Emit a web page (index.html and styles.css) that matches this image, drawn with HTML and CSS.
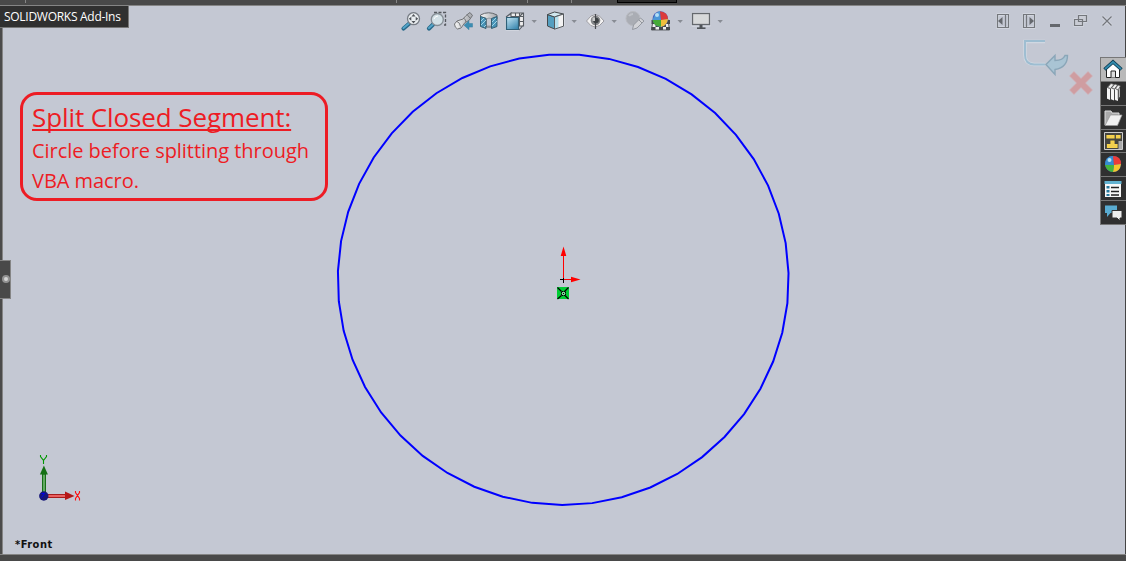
FILE: index.html
```html
<!DOCTYPE html>
<html lang="en">
<head>
<meta charset="utf-8">
<title>SOLIDWORKS sketch</title>
<link rel="stylesheet" href="styles.css">
</head>
<body>
<div class="app">
  <header class="ribbon"><i class="tick t1"></i><i class="tick t2"></i><i class="tick t3"></i><i class="tick t4"></i><i class="slot"></i></header>
  <main class="viewport">
    <svg class="sketch" viewBox="0 0 1126 561">
      <polygon class="circle" transform="rotate(.25 563.2 279.6)" points="563.2,505 593.2,503 622.7,497 651.2,487.1 678.1,473.5 702.9,456.5 725.2,436.3 744.7,413.3 760.9,387.9 773.5,360.6 782.5,331.8 787.5,302.2 788.5,272.1 785.5,242.1 778.5,212.8 767.7,184.7 753.2,158.3 735.3,134.1 714.4,112.4 690.8,93.8 664.9,78.4 637.1,66.7 608.1,58.7 578.3,54.7 548.1,54.7 518.3,58.7 489.3,66.7 461.5,78.4 435.6,93.8 412,112.4 391.1,134.1 373.2,158.3 358.7,184.7 347.9,212.8 340.9,242.1 337.9,272.1 338.9,302.2 343.9,331.8 352.9,360.6 365.5,387.9 381.7,413.3 401.2,436.3 423.5,456.5 448.3,473.5 475.2,487.1 503.7,497 533.2,503"/>
      <!-- origin -->
      <path d="M563.5 279V255M564 279.500h8" stroke="red"/>
      <path d="M563.500 246.500l2.800 9.500h-5.600zM580.500 279.500l-9.500-2.800v5.600z" fill="red"/>
      <path d="M560 279.500h4M563.500 278v5" stroke="#000"/>
      <path d="M557 287h12v12h-12z" fill="#00cc33"/>
      <path d="M557.500 287.500l4 4M568.500 287.500l-4 4M561.500 295.500l-4 3.500M565 295.500l3.500 3.500" stroke="#000" stroke-width="1.100"/>
      <rect x="561.500" y="291.500" width="4" height="4" fill="#7ed49a" stroke="#000" stroke-dasharray="1.500 .5"/>
      <path d="M563 293h1v1h-1z"/>
      <!-- orientation triad -->
      <path d="M42.500 474h3v19h-3z" fill="#62aa62" stroke="#176d17"/>
      <path d="M43.900 465.500l4 9h-8z" fill="#157015"/>
      <path d="M47 494.500h19v3H47z" fill="#e96060" stroke="#a51c1c"/>
      <path d="M65 491.500l9.500 4.500-9.500 4z" fill="#b51616"/>
      <circle cx="43.800" cy="496" r="4.700" fill="#161678"/>
      <path d="M41.500 493.500h3l-3 4" stroke="#0000ee" fill="none"/>
      <path d="M40.500 455v1.500l3 4v3.500M46.500 455v1.500l-3 4" stroke="#009800" stroke-width="1.100" fill="none"/>
      <path d="M75.500 491v1.500l4 6v2M79.500 491v1.500l-4 6v2" stroke="#ff1010" stroke-width="1.100" fill="none"/>
      <!-- confirmation corner -->
      <path d="M1045 41.500h-20V55q0 9 9 9.500h11" fill="none" stroke="#d0d8e2" stroke-width="3.500"/>
      <path d="M1045 41h-20V55q0 9 9 9.500h11" fill="none" stroke="#9dbdd1" stroke-width="1.900"/>
      <path d="M1046 64.500l9-9v5q8 0 10-5h2.500q0 12-12.500 14v5z" fill="#a9c4d4" stroke="#8aa6b8" stroke-width="1.400"/>
      <path d="M1071.500 73.500l9.500 9.500 9.500-9.500M1071.500 92.500l9.500-9.500 9.500 9.500" fill="none" stroke="#cfb1b8" stroke-width="7"/>
      <path d="M1072 74l9 9 9-9M1072 92l9-9 9 9" fill="none" stroke="#cf9da1" stroke-width="5.600"/>
    </svg>

    <div class="tooltip">SOLIDWORKS Add-Ins</div>
    <section class="note"><h1>Split Closed Segment:</h1><p class="line1">Circle before splitting through</p><p class="line2">VBA macro.</p></section>
    <div class="handle"></div>
    <div class="viewname">*Front</div>

    <svg class="headsup" viewBox="395 7 335 28">
      <defs>
        <linearGradient id="metal"><stop stop-color="#f6f6f6"/><stop offset="1" stop-color="#a2a5aa"/></linearGradient>
        <linearGradient id="blue" x2=".7" y2="1"><stop stop-color="#c4e6f4"/><stop offset="1" stop-color="#3e8ab1"/></linearGradient>
      </defs>
      <g class="halo"><path d="M404 28l7-7M429 28l7-7M457 26l11-11M482 16v10l4 1M496 16v9l-4 2M507 18h11v11h-11zM549 15l5 13 9-3V15zM588 21h15M654 20h13v9h-13zM693 14h16v11h-16z"/></g>
      <!-- zoom to fit -->
      <path d="M403.500 28.500l7-6" stroke="#276889" stroke-width="4.200" stroke-linecap="round"/><path d="M403.500 28l6.500-5.500" stroke="#55a5c9" stroke-width="2" stroke-linecap="round"/>
      <circle cx="413.500" cy="18.700" r="6" fill="#e9edf0" stroke="#777c84" stroke-width="1.300"/>
      <path d="M413.500 14l2 2.500h-4zM413.500 23.400l2-2.500h-4zM408.800 18.700l2.500-2v4zM418.200 18.700l-2.500-2v4z" fill="#50545a"/>
      <!-- zoom to area -->
      <path d="M434 12.500h11.500V25H443" fill="none" stroke="#55585e" stroke-width="1.300" stroke-dasharray="3 1.500"/>
      <path d="M429 28.500l6-6" stroke="#276889" stroke-width="4.200" stroke-linecap="round"/><path d="M429 28l5.500-5" stroke="#55a5c9" stroke-width="2" stroke-linecap="round"/>
      <circle cx="437.300" cy="19.500" r="6" fill="#d3e0e6" stroke="#858d94" stroke-width="1.300"/><path d="M434 19q1-3 4-3" stroke="#fff" fill="none"/>
      <!-- previous view -->
      <path d="M454.500 24l2.500-3 6-2 3-3.500 4-3 2.500 3-3.500 5-4 2-4 5.500-3.500 1q-3-1.500-3-5z" fill="url(#metal)" stroke="#707275"/>
      <path d="M457 21.500q3 1 3.500 5M463 18q3 1 3 4M467 14.500l3 3.500" stroke="#77797c" fill="none"/>
      <path d="M464 25.200l5-4.500v2.800h3.500v3.600H469v2.700z" fill="#3b8db3" stroke="#397f9f" stroke-width=".5"/>
      <!-- section view -->
      <path d="M480.500 15q8-4.500 16.500 0v4l-5 2v6h-5.500v-8l-6-2z" fill="url(#metal)" stroke="#63676c"/>
      <path d="M486.500 19q2.500-2 5 0v7h-5z" fill="#c5c8d1" stroke="#85898e" stroke-width=".7"/>
      <path d="M480.500 16.500l5.500 1.800v10.200l-5.500-2zM491.500 18.500l5.500-2v10l-5.500 2z" fill="#4793b7" stroke="#345d71"/><path d="M481 21l3-3M481 25l5-5M484 27l2-2M492 22l4-4M492 26l5-5" stroke="#b9e4f3" stroke-width=".8"/>
      <!-- view orientation -->
      <path d="M511 13h12.500v13H511zM511 16.500h12M511 21.500h12M515.500 13v13M519.500 13v13M506 17l6-4.500M519 17l4-4M519 30l4.500-5" fill="#eee" stroke="#565b61" stroke-width="1.100"/>
      <path d="M506.500 17.500h12v12h-12z" fill="url(#blue)" stroke="#2f6078" stroke-width="1.200"/>
      <!-- display style -->
      <path d="M547.500 14.500l7 2.500v12l-7-3z" fill="#549fc0" stroke="#44494c"/><path d="M547.500 14.500l7-2.500 9 2-9 3z" fill="#d1e8ef" stroke="#44494c"/><path d="M554.500 17l4-1.300v12.200l-4 1.300z" fill="#b5dfec"/><path d="M558.500 15.700l5-1.700v12l-5 1.900z" fill="#f3f3f3"/><path d="M554.500 17v12.200l9-3V14l-9 3" fill="none" stroke="#55595d"/>
      <!-- hide/show items -->
      <path d="M586.500 21q8.700-13 17.500 0-9 12-17.500 0z" fill="#f3f2f2" stroke="#9a9aa0"/><circle cx="595.500" cy="20.500" r="4.800" fill="#85878a"/><path d="M595.500 14v15" stroke="#484b50" stroke-width="1.200"/><circle cx="596" cy="20.500" r="2.800" fill="#3c4043"/><path d="M592.500 17.500h2.500v3.500h-2.500z" fill="#c8c9c9"/>
      <!-- edit appearance -->
      <circle cx="633" cy="18.500" r="7" fill="#aaadb4" stroke="#b8bac0"/><path d="M629 16q1.500-2 4-2" stroke="#bfc2c8" stroke-width="2" fill="none"/><path d="M632.500 29.500l1-4.500 7-7 3.500 3-7 7z" fill="#d2d3d7" stroke="#9498a0"/><path d="M639 20l3 3" stroke="#92969d"/>
      <!-- apply scene -->
      <path d="M653 19.500h15l1.500 10.500h-18z" fill="#eee" stroke="#55595e"/><path d="M651.500 20h4v4h-4zM666 20h4v4h-4zM655.500 24h4v3h-4zM662 24h4v3h-4zM651.500 27h4v3h-4zM659 27h4v3h-4zM666 27h4v3h-4z" fill="#45494d"/>
      <circle cx="660.300" cy="19" r="7.800" fill="#4b65bc"/><path d="M652.500 20q3-8 7.500-9l1 9z" fill="#4b97d8"/><path d="M660 11.200q8 1 8 8l-7 1z" fill="#dc3b3a"/><path d="M661 20l7-1q-1 7-7 7.800z" fill="#f0bf3d"/><path d="M652.500 20l8.500 0v6.800q-7 0-8.500-6.800z" fill="#46aa37"/><circle cx="657" cy="15" r="2" fill="#b3def6"/>
      <!-- view settings -->
      <rect x="692.500" y="13.500" width="17" height="11" fill="#d7d9da" stroke="#64686d" stroke-width="1.300"/><path d="M701 25v3" stroke="#505459" stroke-width="3"/><path d="M697 28.200h8.500" stroke="#505459" stroke-width="1.600"/>
      <path class="carets" d="M531.500 20h5.400l-2.700 3zM571.500 20h5.400l-2.700 3zM611.500 20h5.400l-2.700 3zM677.500 20h5.400l-2.700 3zM717.500 20h5.400l-2.700 3z"/>
    </svg>

    <svg class="windowctl" viewBox="994 11 124 20">
      <g class="halo thin"><path d="M997.500 14.500h11v13h-11zM1023.500 14.500h11v13h-11zM1050 25.500h10M1074.500 19.500h8v6h-8zM1079 15.500h7v6h-7zM1102.500 16.500l9 9M1111.500 16.500l-9 9"/></g>
      <g fill="none" stroke="#74777c" stroke-width="1.200"><path d="M997.500 14.500h11v13h-11zM1005.500 15v12M1023.500 14.500h11v13h-11zM1026.500 15v12"/><path d="M1078.500 15.500h8v6h-8zM1074.500 19.500h8v6h-8z" fill="#c9ccd4"/><path d="M1102.500 16.500l9 9M1111.500 16.500l-9 9"/></g>
      <path d="M998 21l4.500-4v8zM1034 21l-4.500-4v8zM1050 24h10v3h-10z" fill="#65686d"/>
    </svg>
    <i class="edge"></i>

    <nav class="taskpane">
      <span class="tab active"><svg viewBox="0 0 25 23"><path d="M5.500 10.500v9h13v-9l-6.500-6z" fill="#fff" stroke="#222"/><path d="M3.500 11.500L12 4l8.500 7.500" fill="none" stroke="#123f55" stroke-width="3.600"/><path d="M4 11l8-7 8 7" fill="none" stroke="#328cae" stroke-width="1.700"/><path d="M10 19.500V13h4.500v6.500" fill="#ddd" stroke="#222"/></svg></span>
      <span class="tab"><svg viewBox="0 1 25 23"><path d="M6 6.500l4-4 9 2v11l-3 4-10-2z" fill="#b5b5b5"/><path d="M6 7l3 1v11l-3-1.500zM10 7.500l3 1v11l-3-1.500zM14 8l3 1v11l-3-1.500z" fill="#f5f5f5"/><path d="M6.500 6.500l3.500-4 3 1-3.500 4zM10.500 7l3.500-4 2.500 1-3 4zM14.500 7.500l2.500-3.500 2.500 1-2.500 4z" fill="#eee" stroke="#444" stroke-width=".7"/><path d="M9.500 8v10.500M13.500 8.500V19M17.300 9v9" stroke="#444"/></svg></span>
      <span class="tab"><svg viewBox="0 0 25 23"><path d="M4 19V5h6l1 2h7v3" fill="#aaa" stroke="#ddd"/><path d="M4 19.500L9.500 9H21l-4.500 10.500z" fill="#f0f0f0" stroke="#999" stroke-width=".7"/></svg></span>
      <span class="tab"><svg viewBox="0 1 25 23"><path d="M3.500 3.500h18v17h-18z" fill="#44443f" stroke="#ccc"/><path d="M6 6.500h7v2.500H6zM15.500 6.500H19V9h-3.500zM10 12h3v3.500h3v3H6.500v-3H10z" fill="#f0cf50" stroke="#f8d34a" stroke-width="1.200"/><path d="M17.500 12H21v8h-3.500z" fill="#aaa"/></svg></span>
      <span class="tab"><svg viewBox="0 0 25 23"><circle cx="12" cy="11" r="8" fill="#4267b8"/><path d="M4 12q0-9 8-9l1 9z" fill="#348cd0"/><path d="M12 3q8 0 8 8l-7 1z" fill="#ed3b38"/><path d="M13 12l7-1q-1 8-8 8z" fill="#f5c62e"/><path d="M4 12h9l-1 7q-6 0-8-7z" fill="#44b53d"/><circle cx="8.500" cy="7" r="2" fill="#b5e2f6"/></svg></span>
      <span class="tab"><svg viewBox="0 0 25 23"><path d="M4 4h16v16H4z" fill="#f7f7f7"/><path d="M3.500 4h17v3h-17z" fill="#62b2d0"/><path d="M5.500 9h3v2.500h-3zM5.500 13h3v2.500h-3zM5.500 17h3v2h-3z" fill="#26799c"/><path d="M10 10.500h8M10 14.500h8M10 18h8" stroke="#222" stroke-width="1.300"/></svg></span>
      <span class="tab"><svg viewBox="0 0 25 23"><path d="M4 4.500h12V12H9.500L6 16v-4H4z" fill="#59abd0"/><path d="M11 9.500h10V17h-2v3l-3-3h-5z" fill="#eee" stroke="#333"/></svg></span>
    </nav>
  </main>
  <footer class="bottom"></footer>
</div>
</body>
</html>
```
FILE: styles.css
```css
*, *::after { box-sizing: border-box; }
body { margin: 0; overflow: hidden; font-family: "Open Sans", "Noto Sans", sans-serif; }
.app { width: 1126px; height: 561px; display: flex; flex-direction: column; position: relative; background: #4b4b4b; }
.ribbon { height: 6px; flex: none; border-bottom: 1px solid #858585; position: relative; background: #494949; }
.tick, .slot { position: absolute; top: 0; height: 3px; width: 1px; background: #868686; }
.t1 { left: 25px; }
.t2 { left: 396px; }
.t3 { left: 527px; }
.t4 { left: 571px; }
.slot { left: 617px; width: 60px; background: #292929; border: 1px solid #000; border-top: 0; }
.viewport { flex: 1; margin-left: 2px; border-left: 1px solid #858585; background: #c4c8d3; }
.bottom { height: 7px; flex: none; border-top: 1px solid #858585; background: #494949; }
.sketch { position: absolute; left: 0; top: 0; width: 1126px; height: 561px; pointer-events: none; }
.circle { fill: none; stroke: #0000ff; stroke-width: 2; }
.tooltip { position: absolute; left: 0; top: 6px; width: 129px; height: 22px; padding-left: 4px; background: #303030; border: solid #777; border-width: 0 1px 1px 0; color: #fff; font-size: 12px; line-height: 21px; letter-spacing: -.28px; white-space: nowrap; }
.note { position: absolute; left: 20px; top: 92px; width: 308px; height: 109px; padding: 6px 9px; border: 3px solid #ed1c24; border-radius: 17px; color: #ed1c24; white-space: nowrap; }
.note h1 { margin: 0; font-size: 26px; line-height: 32px; font-weight: 400; letter-spacing: -.1px; text-decoration: underline; text-decoration-thickness: 2px; text-decoration-skip-ink: none; text-underline-offset: 2px; }
.note p { margin: 0; font-size: 20px; line-height: 30px; letter-spacing: -.04px; }
.note .line1 { margin-top: 3px; }
.handle { position: absolute; left: 0; top: 260px; width: 11px; height: 39px; background: #494949; border: 1px solid #858585; border-left: 0; }
.handle::after { content: ""; position: absolute; left: 2px; top: 14px; width: 8px; height: 8px; border: 2px solid #929292; border-radius: 50%; background: #d6d6d6; }
.viewname { position: absolute; left: 15px; top: 537px; color: #111; font: bold 11px/15px "DejaVu Sans Condensed", sans-serif; letter-spacing: .5px; }
.headsup { position: absolute; left: 395px; top: 7px; width: 335px; height: 28px; }
.halo { fill: none; stroke: #d9dce4; stroke-width: 4; stroke-linejoin: round; opacity: .65; }
.halo.thin { stroke-width: 3; }
.carets { fill: #888c94; }
.windowctl { position: absolute; left: 994px; top: 11px; width: 124px; height: 20px; }
.edge { position: absolute; left: 1125px; top: 6px; width: 1px; height: 548px; background: #454545; }
.taskpane { position: absolute; left: 1100px; top: 57px; width: 26px; height: 168px; display: flex; flex-direction: column; border: solid #777; border-width: 1px 0 1px 1px; background: #777; gap: 1px; }
.tab { flex: 1; min-height: 0; background: #303030; }
.tab.active { background: #b9b9b9; }
.tab svg { display: block; width: 25px; height: 23px; }
```
